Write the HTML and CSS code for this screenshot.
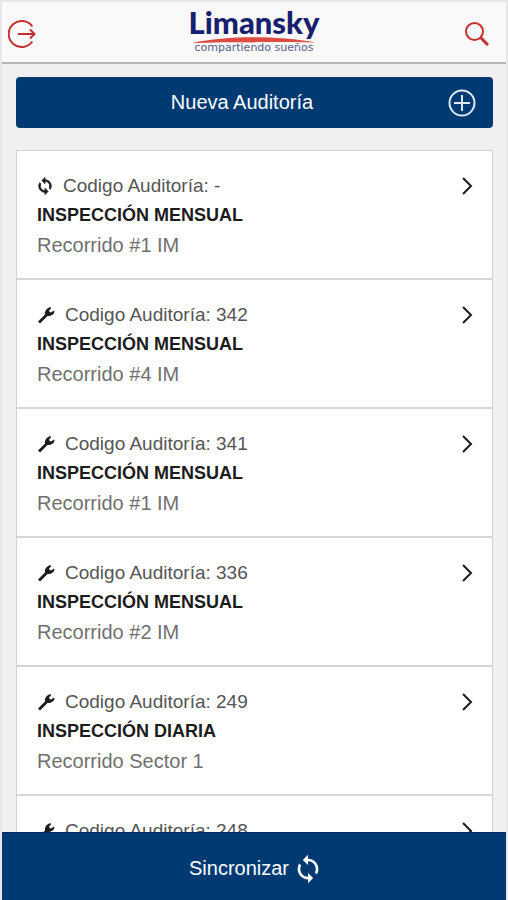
FILE: index.html
```html
<!DOCTYPE html>
<html lang="es">
	<head>
		<meta charset="utf-8">
		<title>Limansky - Auditorías</title>
		<meta name="viewport" content="width=device-width, initial-scale=1">
		<link rel="stylesheet" href="styles.css">
	</head>
	<body>
		<svg class="sprite" aria-hidden="true">
			<symbol id="wrench" viewBox="0 0 18 18">
				<path d="M1 15.500 8 8.500C7.400 5.500 9.500 2 13.500 1L14 2.500 12 4.500 12.800 6.200 14.800 6.200 16.600 4.500 17.500 5.500C17 8.500 14 10.300 10.500 10L3 17.500Z" />
			</symbol>
			<symbol id="sync" viewBox="3.500 .5 17 23">
				<path d="M12 4V1L8 5l4 4V6c3.310 0 6 2.690 6 6 0 1.010-.250 1.970-.700 2.800l1.460 1.460C19.540 15.030 20 13.570 20 12c0-4.420-3.580-8-8-8zM12 18c-3.310 0-6-2.690-6-6 0-1.010.250-1.970.700-2.800L5.240 7.740C4.460 8.970 4 10.430 4 12c0 4.420 3.580 8 8 8v3l4-4-4-4v3z" />
			</symbol>
			<symbol id="chevron" viewBox="0 0 12 20">
				<path d="M2 2 10 10 2 18" />
			</symbol>
		</svg>

		<header class="topbar">
			<button class="icon-button" type="button" aria-label="Salir">
				<svg class="line-icon" width="28" height="28" viewBox="0 0 28 28">
					<path d="M24.300 6.500A13 13 0 1 0 24.300 21.500M10 14H26M22 9.500 26.500 14 22 18.500" />
				</svg>
			</button>
			<div class="logo">
				<span class="logo-name">Limansky</span>
				<svg class="logo-swoosh" viewBox="0 0 124 6" preserveAspectRatio="none">
					<path d="M0 6C35-1.500 85-1.500 124 5.500 85 4.500 40 5 0 6Z" />
				</svg>
				<span class="logo-tagline">compartiendo sueños</span>
			</div>
			<button class="icon-button" type="button" aria-label="Buscar">
				<svg class="line-icon" width="24" height="24" viewBox="0 0 24 24">
					<circle cx="9.500" cy="9.500" r="8.500" />
					<path class="handle" d="M15.500 15.500 23 23" />
				</svg>
			</button>
		</header>

		<main>
			<button class="new-audit" type="button">
				<span>Nueva Auditoría</span>
				<svg width="28" height="28" viewBox="0 0 28 28">
					<path d="M14 6V22M6 14H22" />
					<circle cx="14" cy="14" r="12.500" />
				</svg>
			</button>

			<ul class="audits">
				<li>
					<a href="#">
						<span class="code"><svg class="pending"><use href="#sync" /></svg>Codigo Auditoría: -</span>
						<strong>INSPECCIÓN MENSUAL</strong>
						<span class="route">Recorrido #1 IM</span>
						<svg class="chevron"><use href="#chevron" /></svg>
					</a>
				</li>
				<li>
					<a href="#">
						<span class="code"><svg class="wrench"><use href="#wrench" /></svg>Codigo Auditoría: 342</span>
						<strong>INSPECCIÓN MENSUAL</strong>
						<span class="route">Recorrido #4 IM</span>
						<svg class="chevron"><use href="#chevron" /></svg>
					</a>
				</li>
				<li>
					<a href="#">
						<span class="code"><svg class="wrench"><use href="#wrench" /></svg>Codigo Auditoría: 341</span>
						<strong>INSPECCIÓN MENSUAL</strong>
						<span class="route">Recorrido #1 IM</span>
						<svg class="chevron"><use href="#chevron" /></svg>
					</a>
				</li>
				<li>
					<a href="#">
						<span class="code"><svg class="wrench"><use href="#wrench" /></svg>Codigo Auditoría: 336</span>
						<strong>INSPECCIÓN MENSUAL</strong>
						<span class="route">Recorrido #2 IM</span>
						<svg class="chevron"><use href="#chevron" /></svg>
					</a>
				</li>
				<li>
					<a href="#">
						<span class="code"><svg class="wrench"><use href="#wrench" /></svg>Codigo Auditoría: 249</span>
						<strong>INSPECCIÓN DIARIA</strong>
						<span class="route">Recorrido Sector 1</span>
						<svg class="chevron"><use href="#chevron" /></svg>
					</a>
				</li>
				<li>
					<a href="#">
						<span class="code"><svg class="wrench"><use href="#wrench" /></svg>Codigo Auditoría: 248</span>
						<svg class="chevron"><use href="#chevron" /></svg>
					</a>
				</li>
			</ul>
		</main>

		<button class="sync-bar" type="button">
			Sincronizar
			<svg><use href="#sync" /></svg>
		</button>
	</body>
</html>
```
FILE: styles.css
```css
* {
	box-sizing: border-box;
}
html,
body {
	margin: 0;
	height: 100%;
}
body {
	display: flex;
	flex-direction: column;
	overflow: hidden;
	border: 2px solid #e8e8e8;
	border-bottom: none;
	background: #f1eff0;
	color: #1c1c1c;
	font-family: "Liberation Sans", Arial, sans-serif;
	font-size: 19px;
}
button {
	font: inherit;
	border: none;
	cursor: pointer;
}
svg {
	display: block;
	flex: none;
}
.sprite {
	position: absolute;
	width: 0;
	height: 0;
}

.topbar {
	flex: none;
	display: flex;
	justify-content: space-between;
	align-items: center;
	height: 62px;
	padding: 0 17px 0 6px;
	background: #f9f9f9;
	border-bottom: 2px solid #b5b5b5;
}
.icon-button {
	padding: 3px 0 0;
	background: none;
}
.line-icon {
	fill: none;
	stroke: #c4302c;
	stroke-width: 2;
}
.line-icon .handle {
	stroke-width: 3;
}
.logo {
	display: flex;
	flex-direction: column;
	align-items: center;
	padding: 0 0 4px 7px;
}
.logo-name {
	color: #17206f;
	font-family: Lato, sans-serif;
	font-size: 31px;
	font-weight: 900;
	line-height: 30px;
}
.logo-swoosh {
	width: 124px;
	height: 6px;
	fill: #dd4b42;
}
.logo-tagline {
	color: #5b5f8c;
	font-family: "DejaVu Sans", sans-serif;
	font-size: 11px;
	line-height: 10px;
}

main {
	flex: 1;
	min-height: 0;
	overflow: hidden;
	padding: 13px 13px 0 14px;
}
.new-audit {
	display: grid;
	grid-template-columns: 1fr 28px;
	align-items: center;
	width: 100%;
	height: 51px;
	padding: 0 17px 0 20px;
	background: #003a73;
	border-radius: 4px;
	color: #fff;
	font-size: 20px;
}
.new-audit svg {
	fill: none;
	stroke: #dfe8f5;
	stroke-width: 2;
}

.audits {
	list-style: none;
	margin: 22px 0 0;
	padding: 0;
	background: #fff;
	border: 1px solid #d2d3d6;
}
.audits li {
	border-bottom: 2px solid #d5d6d9;
}
.audits a {
	display: grid;
	grid-template-columns: 1fr 12px;
	row-gap: 1px;
	padding: 20px 19px 18px 20px;
	color: inherit;
	line-height: 29px;
	text-decoration: none;
}
.audits .code,
.audits strong,
.audits .route {
	grid-column: 1;
}
.code {
	display: flex;
	align-items: center;
	gap: 10px;
	color: #555;
}
.audits strong {
	font-size: 18px;
}
.route {
	color: #707070;
	font-size: 20px;
}
.wrench {
	width: 18px;
	height: 18px;
	fill: #1c1c1c;
}
.pending {
	width: 16px;
	height: 18px;
	fill: #1c1c1c;
	stroke: #1c1c1c;
}
.chevron {
	grid-column: 2;
	grid-row: 1;
	align-self: center;
	width: 12px;
	height: 20px;
	fill: none;
	stroke: #1c1c1c;
	stroke-width: 2;
}

.sync-bar {
	flex: none;
	display: flex;
	justify-content: center;
	align-items: center;
	gap: 8px;
	height: 68px;
	padding: 4px 0 0;
	background: #003a73;
	border-top: 1px solid #00246a;
	color: #fff;
	font-size: 20px;
}
.sync-bar svg {
	width: 22px;
	height: 30px;
	fill: #fff;
}
```
